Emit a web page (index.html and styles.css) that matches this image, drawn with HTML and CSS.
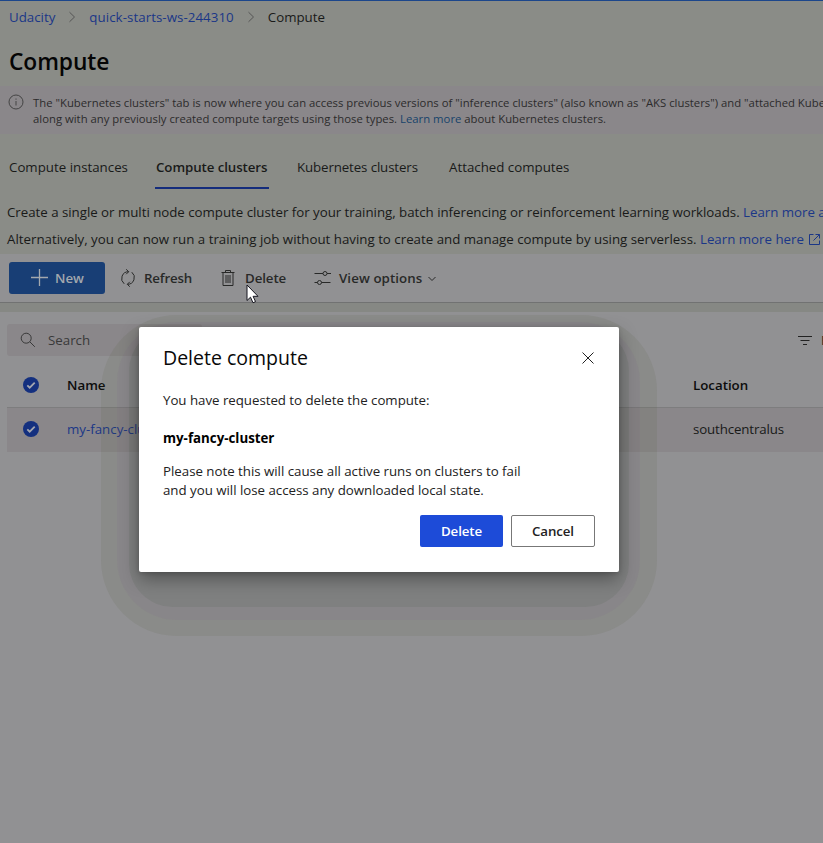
FILE: index.html
```html
<!DOCTYPE html>
<html lang="en">
<head>
<meta charset="utf-8">
<title>Compute</title>
<link rel="stylesheet" href="styles.css">
</head>
<body>
<div class="page">
  <nav class="breadcrumb">
    <a>Udacity</a>
    <svg class="chev" width="8" height="12" viewBox="0 0 8 12"><path d="M1.500 1.200 6.500 6l-5 4.800"/></svg>
    <a class="workspace">quick-starts-ws-244310</a>
    <svg class="chev" width="8" height="12" viewBox="0 0 8 12"><path d="M1.500 1.200 6.500 6l-5 4.800"/></svg>
    <span>Compute</span>
  </nav>
  <h1 class="title">Compute</h1>
  <div class="info">
    <svg class="info-icon" width="16" height="16" viewBox="0 0 16 16"><circle cx="8" cy="8" r="7"/><path d="M8 7v4.500M8 4.500v1.200"/></svg>
    <div class="info-text">
      <div>The "Kubernetes clusters" tab is now where you can access previous versions of "inference clusters" (also known as "AKS clusters") and "attached Kube</div>
      <div>along with any previously created compute targets using those types. <a class="teal">Learn more</a> about Kubernetes clusters.</div>
    </div>
  </div>
  <div class="tabs">
    <div class="tab tab1">Compute instances</div>
    <div class="tab tab2">Compute clusters</div>
    <div class="tab tab3">Kubernetes clusters</div>
    <div class="tab tab4">Attached computes</div>
  </div>
  <div class="desc">
    <div>Create a single or multi node compute cluster for your training, batch inferencing or reinforcement learning workloads. <a>Learn more a</a></div>
    <div>Alternatively, you can now run a training job without having to create and manage compute by using serverless. <a>Learn more here</a><svg class="ext" width="11" height="11" viewBox="0 0 11 11"><path d="M4.500.500h-4v10h10v-4M6.500.500h4v4M10.500.500 4.500 6.500"/></svg></div>
  </div>
  <div class="toolbar">
    <div class="new"><svg width="17" height="17" viewBox="0 0 17 17"><path d="M8.500 0v17M0 8.500h17"/></svg>New</div>
    <div class="cmd refresh"><svg width="16" height="18" viewBox="0 0 16 18"><path id="half" d="M4.200 14.800A6.800 6.800 0 0 1 8.600 2.700M6.200.300l2.500 2.400-2.500 2.500"/><use href="#half" transform="rotate(180 8 9)"/></svg>Refresh</div>
    <div class="cmd delete"><svg width="14" height="16" viewBox="0 0 14 16"><path d="M.500 2.500h13M4.500 2.500v-2h5v2M2 2.500v13h10v-13M5 5v8M7 5v8M9 5v8"/></svg>Delete</div>
    <div class="cmd view"><svg width="17" height="14" viewBox="0 0 17 14"><path d="M.500 2.500h8.500M13 2.500h4M.500 11.500h3M7.500 11.500h9"/><circle cx="11" cy="2.500" r="2"/><circle cx="5.500" cy="11.500" r="2"/></svg>View options<svg class="down" width="8" height="6" viewBox="0 0 8 6"><path d="M.500 1 4 4.500 7.500 1"/></svg></div>
  </div>
  <div class="panel">
    <div class="filters">
      <div class="search"><svg width="16" height="16" viewBox="0 0 16 16"><circle cx="6.200" cy="6.200" r="5"/><path d="m9.800 9.800 5 5"/></svg>Search</div>
      <div class="filter"><svg width="14" height="11" viewBox="0 0 14 11"><path d="M0 1.500h14M2.500 5.500h9M5 9.500h4"/></svg>Filter</div>
    </div>
    <div class="row head"><svg class="check" width="16" height="16" viewBox="0 0 16 16"><circle cx="8" cy="8" r="8"/><path d="m4.300 8.300 2.400 2.400 5-5"/></svg><div class="name">Name</div><span>Location</span></div>
    <div class="row item"><svg class="check" width="16" height="16" viewBox="0 0 16 16"><circle cx="8" cy="8" r="8"/><path d="m4.300 8.300 2.400 2.400 5-5"/></svg><div class="name"><a>my-fancy-cluster</a></div><span class="region">southcentralus</span></div>
  </div>
</div>
<div class="band band1"></div>
<div class="band band2"></div>
<div class="band band3"></div>
<div class="dialog">
  <div class="dhead"><span>Delete compute</span><svg width="12" height="12" viewBox="0 0 12 12"><path d="m.500.500 11 11M11.500.500l-11 11"/></svg></div>
  <p class="ask">You have requested to delete the compute:</p>
  <p class="target">my-fancy-cluster</p>
  <p class="note">Please note this will cause all active runs on clusters to fail<br>and you will lose access any downloaded local state.</p>
  <div class="actions"><div class="btn primary">Delete</div><div class="btn">Cancel</div></div>
</div>
<svg class="cursor" width="13" height="20" viewBox="0 0 13 20"><path d="M1 1v15.500l3.500-3.300 2.500 5.600 2.500-1.200-2.400-5.300H12z"/></svg>
</body>
</html>
```

FILE: styles.css
```css
* { box-sizing: border-box; }
body {
  margin: 0;
  width: 823px;
  height: 843px;
  overflow: hidden;
  background: #919193;
  font: 13.3px/20px "Open Sans", "Noto Sans", sans-serif;
  color: #191a19;
}
svg { fill: none; stroke: currentColor; flex: none; }
a { color: #1b3787; }
p { margin: 0; }
.page { width: 823px; height: 843px; overflow: hidden; white-space: nowrap; }
.breadcrumb {
  display: flex;
  align-items: center;
  height: 34px;
  padding: 0 0 2px 9px;
  border-top: 1px solid #1c468b;
  background: #8a8c87;
}
.workspace { letter-spacing: .06px; }
.chev { margin: 0 13px; color: #555; }
.title {
  margin: 0;
  height: 52px;
  padding: 12px 0 0 9px;
  background: #8a8c87;
  font-size: 22.8px;
  line-height: 32px;
  letter-spacing: -.1px;
  font-weight: 600;
  color: #050505;
}
.info {
  display: flex;
  height: 48px;
  padding: 9px 0 0 9px;
  background: #8a878a;
  color: #2c2b2c;
  font-size: 11.3px;
  line-height: 16px;
}
.info-icon { margin: -1px 8px 0 -1px; color: #444; }
.info-text { margin-left: 1px; letter-spacing: .01px; }
.teal { color: #17436a; }
.tabs {
  display: flex;
  height: 60px;
  padding-left: 9px;
  background: #8a8c87;
}
.tab { height: 55px; padding-top: 23px; }
.tab1 { width: 147px; }
.tab2 { position: relative; width: 141px; font-weight: 600; letter-spacing: -.08px; }
.tab2::after { content: ""; position: absolute; left: -1px; bottom: 0; width: 114px; height: 2px; background: #142c7c; }
.tab3 { width: 152px; letter-spacing: -.12px; }
.desc {
  height: 60px;
  padding: 8px 0 0 7px;
  background: #8a8c87;
  letter-spacing: -.025px;
}
.desc div { display: flex; align-items: center; height: 20px; margin-bottom: 7px; white-space: pre; }
.desc div + div { letter-spacing: 0; }
.ext { margin-left: 5px; color: #1b3787; }
.toolbar {
  display: flex;
  align-items: center;
  height: 49px;
  padding: 0 0 1px 9px;
  background: #919193;
  border-bottom: 1px solid #717272;
  font-weight: 600;
  color: #282928;
}
.new {
  display: flex;
  align-items: center;
  width: 96px;
  height: 32px;
  padding-left: 22px;
  border-radius: 3px;
  background: #183e75;
  color: #a3a8ae;
}
.new svg { margin-right: 7px; stroke-width: 1.3; }
.cmd { display: flex; align-items: center; }
.refresh { width: 101px; padding-left: 15px; letter-spacing: -.19px; }
.refresh svg { margin-right: 8px; }
.delete { width: 94px; padding-left: 15px; letter-spacing: -.1px; }
.delete svg { margin-right: 10px; }
.view { padding-left: 14px; letter-spacing: .09px; }
.view > svg:first-child { margin-right: 8px; }
.view .down { margin: 2px 0 0 6px; }
.panel { border-top: 9px solid #868884; }
.filters { display: flex; justify-content: space-between; height: 52px; padding: 12px 0 8px 7px; }
.search {
  display: flex;
  align-items: center;
  width: 195px;
  height: 32px;
  padding-left: 13px;
  border-radius: 3px;
  background: #8a878a;
  color: #393939;
}
.search svg { margin-right: 12px; }
.filter { display: flex; align-items: center; width: 25px; height: 32px; color: #222; }
.filter svg { margin-right: 9px; }
.row { display: flex; align-items: center; margin-left: 7px; padding: 0 0 1px 16px; }
.head { height: 44px; border-bottom: 1px solid #7d7d7e; font-weight: 600; color: #0c0c0c; }
.item { height: 44px; padding-bottom: 2px; background: #8a878a; }
.check { margin-right: 28px; }
.check circle { fill: #14307f; stroke: none; }
.check path { stroke: #a3a6b0; stroke-width: 1.8; }
.name { width: 626px; }
.region { letter-spacing: -.13px; }
.band { position: absolute; }
.band1 { left: 101px; top: 315px; width: 556px; height: 321px; border-radius: 76px; background: rgba(75, 90, 50, .1); }
.band2 { left: 117px; top: 322px; width: 523px; height: 298px; border-radius: 60px; background: rgba(120, 50, 130, .05); }
.band3 { left: 129px; top: 327px; width: 500px; height: 280px; border-radius: 44px; background: rgba(20, 60, 20, .07); }
.dialog {
  position: absolute;
  left: 139px;
  top: 327px;
  width: 480px;
  height: 245px;
  padding: 16px 24px 0;
  border-radius: 2px;
  background: #fff;
  color: #222;
  box-shadow: 0 7px 18px rgba(0, 0, 0, .36), 0 1px 4px rgba(0, 0, 0, .16);
  white-space: nowrap;
}
.dhead { display: flex; justify-content: space-between; align-items: center; height: 30px; font-size: 19.5px; font-weight: 500; color: #080808; }
.dhead svg { margin-right: 1px; color: #222; }
.ask { margin-top: 17px; letter-spacing: -.03px; }
.target { margin-top: 18px; font-weight: 700; color: #000; }
.note { margin-top: 14px; line-height: 19px; letter-spacing: -.02px; }
.actions { display: flex; justify-content: flex-end; gap: 8px; margin-top: 15px; }
.btn {
  display: flex;
  align-items: center;
  justify-content: center;
  width: 84px;
  height: 32px;
  border: 1px solid #777;
  border-radius: 2px;
  font-weight: 600;
  letter-spacing: -.1px;
}
.primary { width: 83px; border: 0; background: #1d4bd8; color: #fff; }
.cursor { position: absolute; left: 246px; top: 284px; }
.cursor path { fill: #fff; stroke: #15151e; }
```
